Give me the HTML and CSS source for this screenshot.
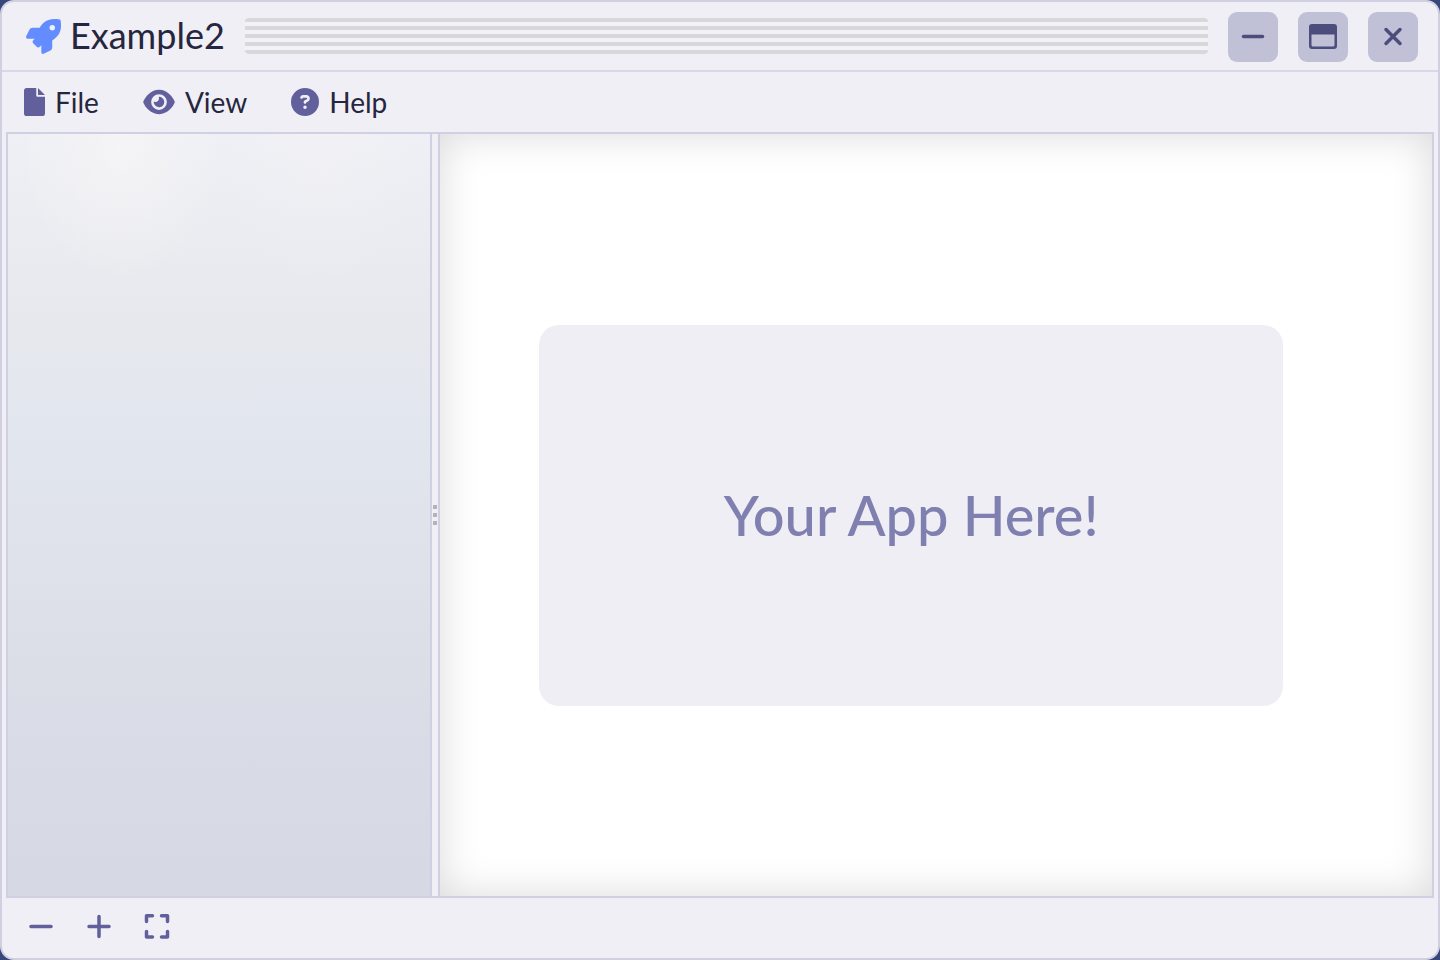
FILE: index.html
```
<!DOCTYPE html>
<html lang="en">
<head>
<meta charset="utf-8">
<title>Example2</title>
<link rel="stylesheet" href="styles.css">
</head>
<body>
<div class="window">
  <header class="titlebar">
    <svg class="logo" viewBox="0 0 512 512" aria-hidden="true"><path d="M505.12 19.094c-1.19-5.532-6.658-11-12.207-12.188C460.716 0 435.507 0 410.407 0 307.175 0 245.27 55.203 199.052 128H94.838c-16.348.016-35.557 11.875-42.887 26.484L2.516 253.297A28.4 28.4 0 0 0 0 264a24 24 0 0 0 24 24h103.816l-22.474 22.469c-11.365 11.36-12.996 32.258 0 45.25l50.904 50.906c11.156 11.187 32.156 13.156 45.277 0l22.475-22.469V488a24 24 0 0 0 24 24 28.56 28.56 0 0 0 10.707-2.516l98.729-49.39c14.628-7.297 26.507-26.5 26.507-42.86V312.797c72.598-46.313 128.035-108.406 128.035-211.094.1-25.203.1-50.406-6.856-82.61zM384.04 168A40 40 0 1 1 424.05 128a40.02 40.02 0 0 1-40.01 40z"/></svg>
    <h1 class="title">Example2</h1>
    <div class="grip"></div>
    <div class="controls">
      <button class="control" type="button" aria-label="Minimize"><svg viewBox="0 0 50 50"><path class="stroke" d="M15.500 24.500H34.500"/></svg></button>
      <button class="control" type="button" aria-label="Maximize"><svg viewBox="0 0 50 50"><path fill-rule="evenodd" d="M14 12H36Q39 12 39 15V34Q39 37 36 37H14Q11 37 11 34V15Q11 12 14 12ZM13.500 22.500V33Q13.500 34.500 15 34.500H35Q36.500 34.500 36.500 33V22.500Z"/></svg></button>
      <button class="control" type="button" aria-label="Close"><svg viewBox="0 0 50 50"><path class="stroke" d="M18 17.500L32 31.500M32 17.500L18 31.500"/></svg></button>
    </div>
  </header>
  <nav class="menubar">
    <button class="menu" type="button"><svg class="icon-file" viewBox="0 0 384 512"><path d="M224 136V0H48C20 0 0 20 0 48v416c0 28 20 48 48 48h288c28 0 48-20 48-48V160H248c-13.200 0-24-10.800-24-24zm160-8H256V0z"/></svg>File</button>
    <button class="menu" type="button"><svg class="icon-eye" viewBox="0 0 576 512"><path d="M288 32c-80.800 0-145.500 36.800-192.600 80.600C48.600 156 17.300 208 2.500 243.700c-3.300 7.900-3.300 16.700 0 24.600C17.300 304 48.600 356 95.400 399.400 142.500 443.200 207.200 480 288 480s145.500-36.800 192.600-80.600c46.800-43.500 78.100-95.400 93-131.100 3.300-7.900 3.300-16.700 0-24.600-14.900-35.700-46.200-87.700-93-131.100C433.500 68.800 368.800 32 288 32zM144 256a144 144 0 1 1 288 0 144 144 0 1 1-288 0zm144-64c0 35.300-28.700 64-64 64-7.100 0-13.900-1.200-20.300-3.300-5.500-1.800-11.900 1.600-11.700 7.400.3 6.900 1.300 13.800 3.200 20.700 13.700 51.200 66.400 81.600 117.600 67.900s81.600-66.400 67.900-117.600c-11.100-41.500-47.800-69.400-88.600-71.100-5.800-.2-9.200 6.100-7.400 11.700 2.100 6.400 3.300 13.200 3.300 20.300z"/></svg>View</button>
    <button class="menu" type="button"><svg class="icon-help" viewBox="0 0 512 512"><path d="M256 512A256 256 0 1 0 256 0a256 256 0 1 0 0 512zM169.800 165.300c7.900-22.300 29.100-37.300 52.800-37.300h58.300c34.900 0 63.100 28.300 63.100 63.100 0 22.600-12.100 43.500-31.700 54.800L280 264.400c-.2 13-10.900 23.600-24 23.600-13.300 0-24-10.700-24-24v-13.500c0-8.600 4.600-16.500 12.100-20.800l44.300-25.400c4.700-2.700 7.600-7.700 7.600-13.100 0-8.400-6.800-15.100-15.100-15.100h-58.300c-3.400 0-6.400 2.100-7.500 5.300l-.4 1.200c-4.400 12.500-18.200 19-30.600 14.600s-19-18.200-14.600-30.600zM224 352a32 32 0 1 1 64 0 32 32 0 1 1-64 0z"/></svg>Help</button>
  </nav>
  <div class="workspace">
    <aside class="sidebar"></aside>
    <div class="splitter"><i></i><i></i><i></i></div>
    <main class="content"><section class="card"><p class="message">Your App Here!</p></section></main>
  </div>
  <footer class="statusbar">
    <button class="tool" type="button" aria-label="Zoom out"><svg viewBox="0 0 30 30"><path class="stroke" d="M5 15.500H25"/></svg></button>
    <button class="tool" type="button" aria-label="Zoom in"><svg viewBox="0 0 30 30"><path class="stroke" d="M5 15.500H25M15 5.500V25.500"/></svg></button>
    <button class="tool" type="button" aria-label="Fit to screen"><svg viewBox="0 0 30 30"><path class="stroke" d="M4.500 10.500V4.800H10.500M19.500 4.800H25.500V10.500M25.500 20.500V26H19.500M10.500 26H4.500V20.500"/></svg></button>
  </footer>
</div>
</body>
</html>
```
FILE: styles.css
```
* { box-sizing: border-box; }
body {
  margin: 0;
  background: #36477a;
  color: #26263e;
  font-family: Lato, "Open Sans", sans-serif;
}
button {
  margin: 0;
  padding: 0;
  border: 0;
  background: none;
  color: inherit;
  font: inherit;
  cursor: pointer;
}
svg { display: block; flex: none; fill: currentColor; }
.stroke {
  fill: none;
  stroke: currentColor;
  stroke-width: 3.5;
  stroke-linecap: round;
  stroke-linejoin: round;
}
.window {
  display: flex;
  flex-direction: column;
  height: 100vh;
  border: 2px solid #d0d0e2;
  border-radius: 14px;
  background: #f0eff5;
  overflow: hidden;
}
.titlebar {
  display: flex;
  align-items: center;
  height: 70px;
  flex: none;
  padding: 0 20px 0 24px;
  border-bottom: 2px solid #d9d8e8;
}
.logo { width: 35px; height: 35px; color: #628cff; }
.title {
  margin: 0 20px 0 9px;
  padding-bottom: 3px;
  font-size: 36px;
  line-height: 44px;
  font-weight: 400;
}
.grip {
  flex: 1;
  height: 36px;
  border-radius: 4px;
  background: repeating-linear-gradient(#d8d7dc 0 4px, #f3f2f7 4px 8px);
}
.controls { display: flex; gap: 20px; margin-left: 20px; padding-top: 2px; }
.control {
  width: 50px;
  height: 50px;
  border-radius: 9px;
  background: #c0c0d7;
  color: #4c4c7d;
}
.menubar {
  display: flex;
  align-items: center;
  gap: 44px;
  height: 60px;
  flex: none;
  padding: 0 22px 1px;
}
.menu {
  display: flex;
  align-items: center;
  gap: 10px;
  font-size: 28px;
  line-height: 34px;
}
.menu svg { color: #61609d; }
.icon-file { width: 21px; height: 28px; }
.icon-eye { width: 32px; height: 28px; }
.icon-help { width: 28px; height: 28px; }
.workspace {
  display: flex;
  flex: 1;
  min-height: 0;
  margin: 0 4px;
  border: 2px solid #d0d0e2;
}
.sidebar {
  width: 424px;
  flex: none;
  border-right: 2px solid #d0d0e2;
  background:
    radial-gradient(ellipse 100px 130px at 27% 2%, rgba(247, 246, 246, 0.7), rgba(247, 246, 246, 0)),
    radial-gradient(ellipse 100px 140px at 74% 2%, rgba(244, 242, 247, 0.3), rgba(244, 242, 247, 0)),
    linear-gradient(#eff0f5, #e8e9ee 22%, #e2e6ee 38%, #dee1e9 60%, #d9dbe6 80%, #d6d8e3);
}
.splitter {
  display: flex;
  flex-direction: column;
  align-items: center;
  justify-content: center;
  gap: 4px;
  width: 8px;
  flex: none;
  border-right: 2px solid #d0d0e2;
}
.splitter i { width: 4px; height: 4px; background: #b4b3b7; }
.content {
  display: flex;
  align-items: center;
  flex: 1;
  background: #fff;
  box-shadow: inset 0 0 40px rgba(0, 0, 0, 0.15);
}
.card {
  display: grid;
  place-items: center;
  width: 75%;
  height: 50%;
  margin-left: 10%;
  border-radius: 20px;
  background: #efeef5;
}
.message {
  margin: 0;
  color: #8080b0;
  font-size: 56px;
  line-height: 68px;
  font-weight: 500;
}
.statusbar {
  display: flex;
  align-items: center;
  gap: 28px;
  height: 60px;
  flex: none;
  padding: 0 24px 4px;
  color: #61609d;
}
.tool { width: 30px; height: 30px; }
```
